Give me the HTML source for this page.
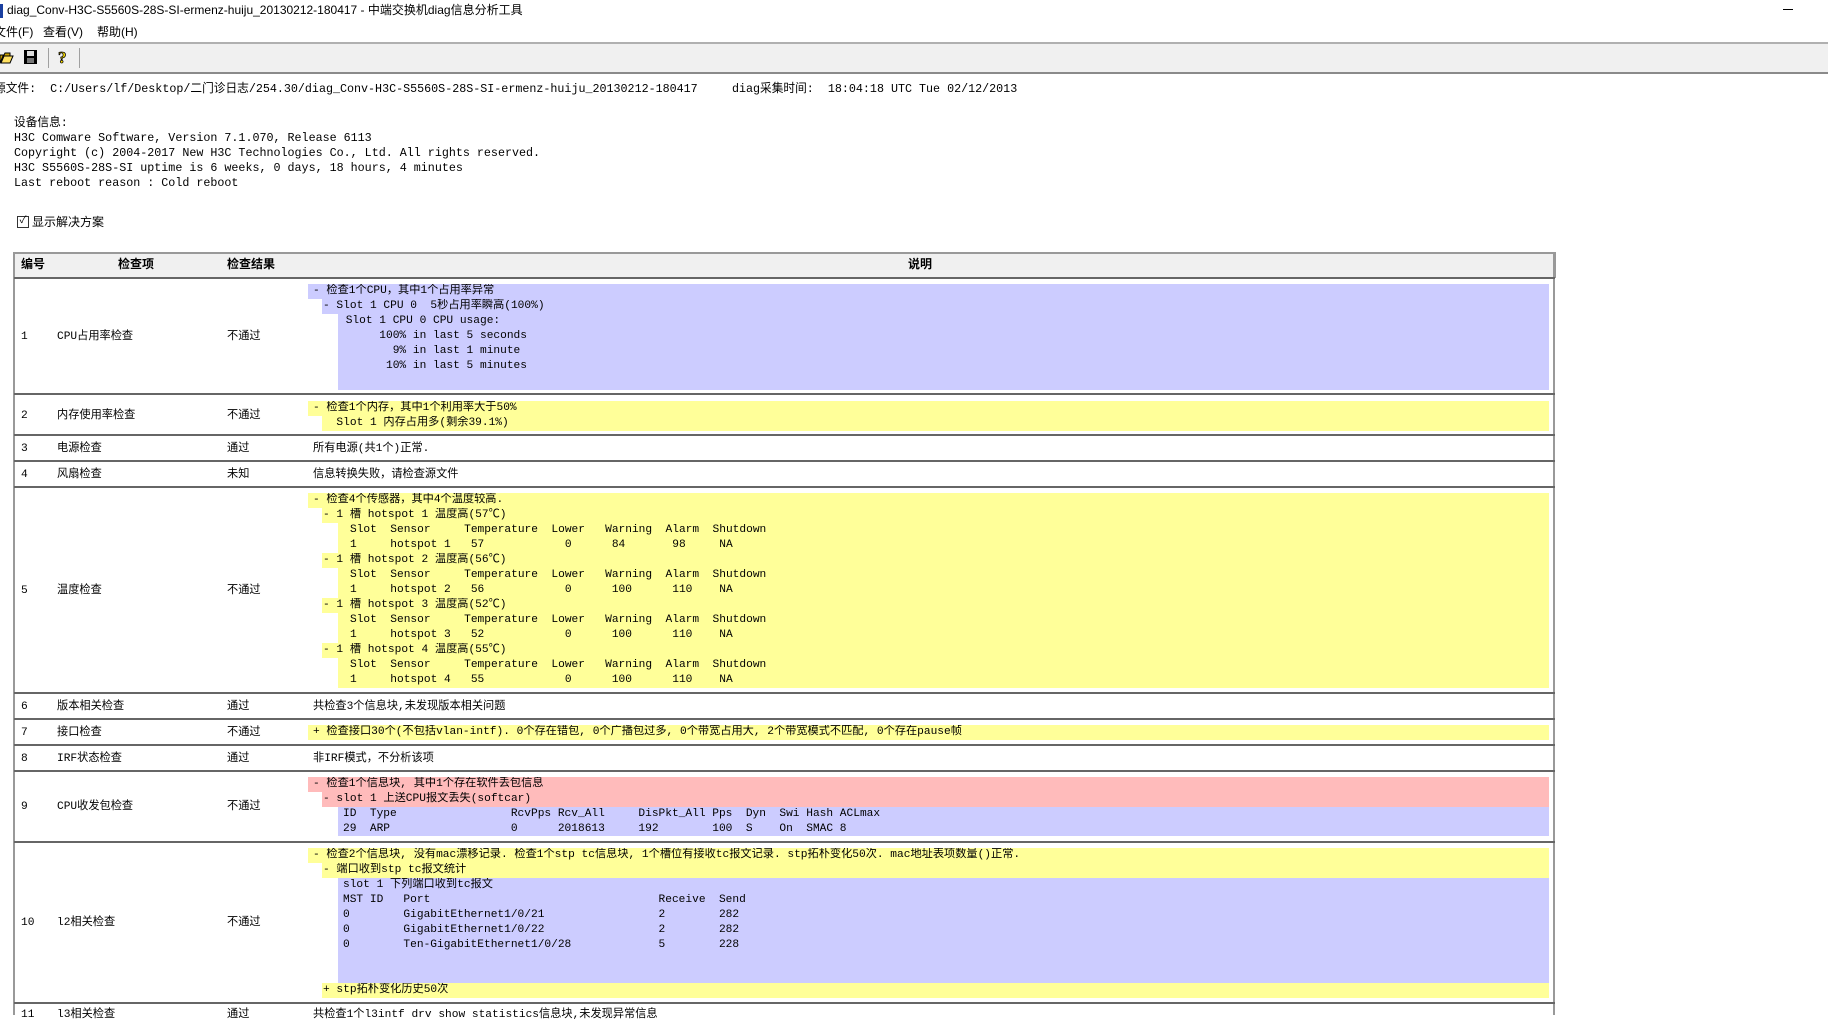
<!DOCTYPE html>
<html><head><meta charset="utf-8"><style>
*{margin:0;padding:0;box-sizing:border-box}
body{width:1828px;height:1015px;overflow:hidden;background:#fff;position:relative;font-family:"Liberation Mono","Noto Sans CJK SC",monospace;font-size:11.2px;color:#000}
.a{position:absolute;white-space:pre;line-height:15px}
.ui{font-family:"Liberation Sans","Noto Sans CJK SC",sans-serif;font-size:12px}
.hl{position:absolute;left:14px;width:1541px;height:2px;background:#666}
.ln{height:15px;line-height:15px;white-space:pre;overflow:hidden}
.B{background:#ccccff}.Y{background:#ffff99}.P{background:#ffbbbb}
.d{position:absolute;left:308px;width:1241px}
.l0{margin-left:0;padding-left:5px}.l1{margin-left:14px;padding-left:1px}.l2{margin-left:30px;padding-left:5px}
.l2b{margin-left:30px;padding-left:12px}
.w{font-size:11.7px}
.r{margin-top:2px}
</style></head><body>
<div class="a" style="left:0;top:4px;width:3px;height:14px;background:#1a3fa0"></div>
<div class="a ui" style="left:7px;top:3px">diag_Conv-H3C-S5560S-28S-SI-ermenz-huiju_20130212-180417 - 中端交换机diag信息分析工具</div>
<div class="a" style="left:1783px;top:9px;width:10px;height:1px;background:#000"></div>
<div class="a ui" style="left:-6px;top:25px">文件(F)</div>
<div class="a ui" style="left:43px;top:25px">查看(V)</div>
<div class="a ui" style="left:97px;top:25px">帮助(H)</div>
<div class="a" style="left:0;top:42px;width:1828px;height:32px;background:#f0f0f0;border-top:2px solid #b0b0b0;border-bottom:2px solid #8a8a8a"></div>
<svg class="a" style="left:0;top:48px" width="90" height="20">
<path d="M0 7h4l1-2h5v3H3l-3 7z" fill="#c8a000" stroke="#000" stroke-width="1"/><path d="M1 15l3-7h9l-3 7z" fill="#ffe060" stroke="#000"/>
<rect x="24" y="2" width="13" height="14" fill="#000"/><rect x="27" y="3" width="7" height="5" fill="#ddd"/><rect x="27" y="10" width="7" height="5" fill="#777"/>
<line x1="48.5" y1="0" x2="48.5" y2="20" stroke="#a0a0a0"/>
<text x="58" y="15" font-family="Liberation Serif" font-weight="bold" font-size="17" fill="#ffe000" stroke="#000" stroke-width="0.8">?</text>
<line x1="79.5" y1="0" x2="79.5" y2="20" stroke="#a0a0a0"/>
</svg>
<div class="a w" style="left:-6px;top:82px">源文件:  C:/Users/lf/Desktop/二门诊日志/254.30/diag_Conv-H3C-S5560S-28S-SI-ermenz-huiju_20130212-180417</div>
<div class="a w" style="left:732px;top:82px">diag采集时间:  18:04:18 UTC Tue 02/12/2013</div>
<div class="a w" style="left:14px;top:116px">设备信息:
H3C Comware Software, Version 7.1.070, Release 6113
Copyright (c) 2004-2017 New H3C Technologies Co., Ltd. All rights reserved.
H3C S5560S-28S-SI uptime is 6 weeks, 0 days, 18 hours, 4 minutes
Last reboot reason : Cold reboot</div>
<div class="a" style="left:17px;top:216px;width:12px;height:12px;border:1px solid #333;background:#fff;font-size:10px;line-height:10px;text-align:center">✓</div>
<div class="a ui" style="left:32px;top:215px">显示解决方案</div>

<div class="a" style="left:13px;top:252px;width:1543px;height:26px;background:#f0f0f0;border:2px solid #999;border-bottom:none"></div>
<div class="a" style="left:13px;top:252px;width:2px;height:763px;background:#999"></div>
<div class="a" style="left:1553px;top:252px;width:2px;height:763px;background:#999"></div>
<div class="a ui" style="left:21px;top:257px;font-weight:bold">编号</div>
<div class="a ui" style="left:118px;top:257px;font-weight:bold">检查项</div>
<div class="a ui" style="left:227px;top:257px;font-weight:bold">检查结果</div>
<div class="a ui" style="left:908px;top:257px;font-weight:bold">说明</div>
<div class="hl" style="top:277px"></div>
<div class="hl" style="top:393px"></div>
<div class="hl" style="top:434px"></div>
<div class="hl" style="top:460px"></div>
<div class="hl" style="top:486px"></div>
<div class="hl" style="top:692px"></div>
<div class="hl" style="top:718px"></div>
<div class="hl" style="top:744px"></div>
<div class="hl" style="top:770px"></div>
<div class="hl" style="top:841px"></div>
<div class="hl" style="top:1002px"></div>

<div class="a r" style="left:21px;top:328px">1</div><div class="a r" style="left:57px;top:328px">CPU占用率检查</div><div class="a r" style="left:227px;top:328px">不通过</div>
<div class="a r" style="left:21px;top:407px">2</div><div class="a r" style="left:57px;top:407px">内存使用率检查</div><div class="a r" style="left:227px;top:407px">不通过</div>
<div class="a r" style="left:21px;top:440px">3</div><div class="a r" style="left:57px;top:440px">电源检查</div><div class="a r" style="left:227px;top:440px">通过</div>
<div class="a r" style="left:21px;top:466px">4</div><div class="a r" style="left:57px;top:466px">风扇检查</div><div class="a r" style="left:227px;top:466px">未知</div>
<div class="a r" style="left:21px;top:582px">5</div><div class="a r" style="left:57px;top:582px">温度检查</div><div class="a r" style="left:227px;top:582px">不通过</div>
<div class="a r" style="left:21px;top:698px">6</div><div class="a r" style="left:57px;top:698px">版本相关检查</div><div class="a r" style="left:227px;top:698px">通过</div>
<div class="a r" style="left:21px;top:724px">7</div><div class="a r" style="left:57px;top:724px">接口检查</div><div class="a r" style="left:227px;top:724px">不通过</div>
<div class="a r" style="left:21px;top:750px">8</div><div class="a r" style="left:57px;top:750px">IRF状态检查</div><div class="a r" style="left:227px;top:750px">通过</div>
<div class="a r" style="left:21px;top:798px">9</div><div class="a r" style="left:57px;top:798px">CPU收发包检查</div><div class="a r" style="left:227px;top:798px">不通过</div>
<div class="a r" style="left:21px;top:914px">10</div><div class="a r" style="left:57px;top:914px">l2相关检查</div><div class="a r" style="left:227px;top:914px">不通过</div>
<div class="a r" style="left:21px;top:1006px">11</div><div class="a r" style="left:57px;top:1006px">l3相关检查</div><div class="a r" style="left:227px;top:1006px">通过</div>

<div class="d" style="top:284px">
<div class="ln B l0">- 检查1个CPU，其中1个占用率异常</div>
<div class="ln B l1">- Slot 1 CPU 0  5秒占用率瞬高(100%)</div>
<div class="ln B l2" style="padding-left:1px;height:76px"> Slot 1 CPU 0 CPU usage:
      100% in last 5 seconds
        9% in last 1 minute
       10% in last 5 minutes
</div>
</div>

<div class="d" style="top:401px">
<div class="ln Y l0">- 检查1个内存，其中1个利用率大于50%</div>
<div class="ln Y l1">  Slot 1 内存占用多(剩余39.1%)</div>
</div>
<div class="a r" style="left:313px;top:440px">所有电源(共1个)正常.</div>
<div class="a r" style="left:313px;top:466px">信息转换失败，请检查源文件</div>

<div class="d" style="top:493px">
<div class="ln Y l0">- 检查4个传感器，其中4个温度较高.</div>
<div class="ln Y l1">- 1 槽 hotspot 1 温度高(57℃)</div>
<div class="ln Y l2b" style="height:30px">Slot  Sensor     Temperature  Lower   Warning  Alarm  Shutdown
1     hotspot 1   57            0      84       98     NA</div>
<div class="ln Y l1">- 1 槽 hotspot 2 温度高(56℃)</div>
<div class="ln Y l2b" style="height:30px">Slot  Sensor     Temperature  Lower   Warning  Alarm  Shutdown
1     hotspot 2   56            0      100      110    NA</div>
<div class="ln Y l1">- 1 槽 hotspot 3 温度高(52℃)</div>
<div class="ln Y l2b" style="height:30px">Slot  Sensor     Temperature  Lower   Warning  Alarm  Shutdown
1     hotspot 3   52            0      100      110    NA</div>
<div class="ln Y l1">- 1 槽 hotspot 4 温度高(55℃)</div>
<div class="ln Y l2b" style="height:30px">Slot  Sensor     Temperature  Lower   Warning  Alarm  Shutdown
1     hotspot 4   55            0      100      110    NA</div>
</div>

<div class="a r" style="left:313px;top:698px">共检查3个信息块,未发现版本相关问题</div>
<div class="d" style="top:725px"><div class="ln Y l0">+ 检查接口30个(不包括vlan-intf). 0个存在错包, 0个广播包过多, 0个带宽占用大, 2个带宽模式不匹配, 0个存在pause帧</div></div>
<div class="a r" style="left:313px;top:750px">非IRF模式，不分析该项</div>

<div class="d" style="top:777px">
<div class="ln P l0">- 检查1个信息块, 其中1个存在软件丢包信息</div>
<div class="ln P l1">- slot 1 上送CPU报文丢失(softcar)</div>
<div class="ln B l2" style="height:29px">ID  Type                 RcvPps Rcv_All     DisPkt_All Pps  Dyn  Swi Hash ACLmax
29  ARP                  0      2018613     192        100  S    On  SMAC 8</div>
</div>

<div class="d" style="top:848px">
<div class="ln Y l0">- 检查2个信息块, 没有mac漂移记录. 检查1个stp tc信息块, 1个槽位有接收tc报文记录. stp拓朴变化50次. mac地址表项数量()正常.</div>
<div class="ln Y l1">- 端口收到stp tc报文统计</div>
<div class="ln B l2" style="height:105px">slot 1 下列端口收到tc报文
MST ID   Port                                  Receive  Send
0        GigabitEthernet1/0/21                 2        282
0        GigabitEthernet1/0/22                 2        282
0        Ten-GigabitEthernet1/0/28             5        228</div>
<div class="ln Y l1">+ stp拓朴变化历史50次</div>
</div>
<div class="a r" style="left:313px;top:1006px">共检查1个l3intf drv show statistics信息块,未发现异常信息</div>
</body></html>
